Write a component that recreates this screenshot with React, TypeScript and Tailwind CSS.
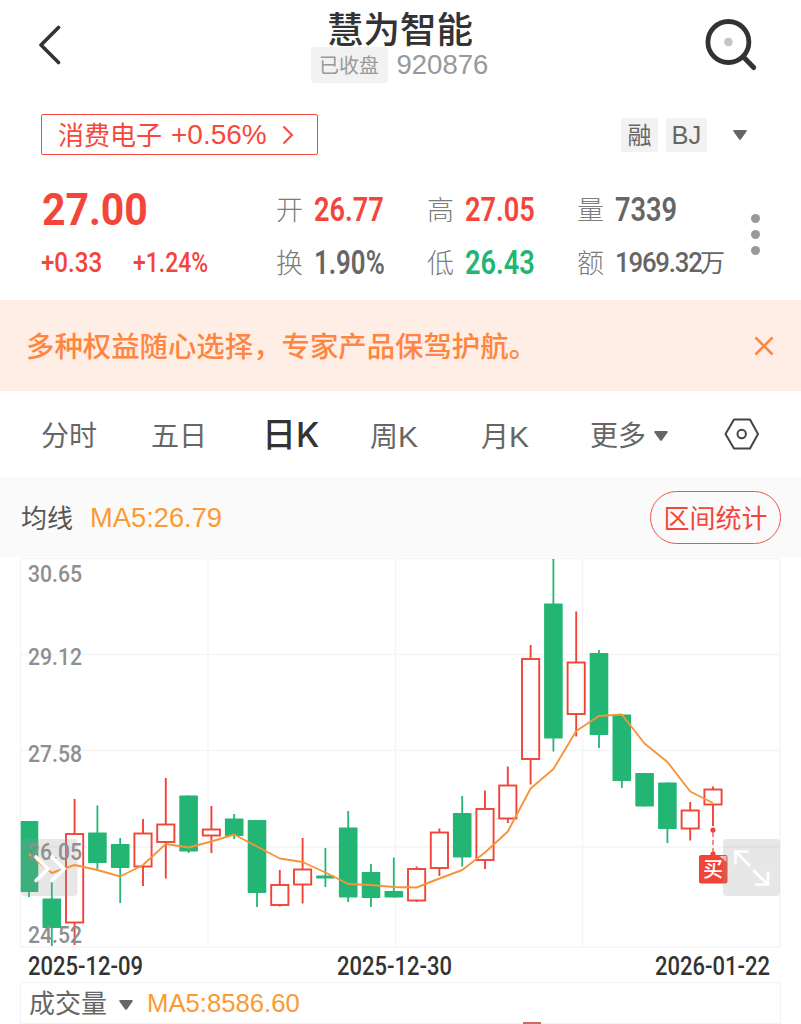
import type { ReactNode } from "react";

type Candle = { top: number; bottom: number; high: number; low: number; up?: boolean };

// Vertical positions are in chart units, one candle every STEP
const CANDLES: Candle[] = [
  { top: 821, bottom: 892, high: 821, low: 897 },
  { top: 898.5, bottom: 928, high: 882, low: 946 },
  { top: 834, bottom: 922.5, high: 799, low: 945, up: true },
  { top: 832.5, bottom: 863, high: 805.5, low: 869 },
  { top: 844, bottom: 868, high: 838, low: 903 },
  { top: 833.5, bottom: 866.5, high: 819, low: 886, up: true },
  { top: 824.5, bottom: 842, high: 778, low: 878.5, up: true },
  { top: 795.5, bottom: 851.5, high: 795.5, low: 853 },
  { top: 829.5, bottom: 835.5, high: 806, low: 853, up: true },
  { top: 818.5, bottom: 836, high: 814, low: 839 },
  { top: 820, bottom: 893, high: 820, low: 907 },
  { top: 885, bottom: 905, high: 870, low: 906.5, up: true },
  { top: 869.5, bottom: 884.5, high: 838, low: 903.5, up: true },
  { top: 875.5, bottom: 878.5, high: 848, low: 887 },
  { top: 827.5, bottom: 897.5, high: 811, low: 902 },
  { top: 872, bottom: 898, high: 864, low: 907 },
  { top: 891, bottom: 897.5, high: 857.5, low: 897.5 },
  { top: 869, bottom: 900.5, high: 866.5, low: 902, up: true },
  { top: 832.5, bottom: 868, high: 828.5, low: 876, up: true },
  { top: 813, bottom: 857.5, high: 796, low: 866.5 },
  { top: 809, bottom: 860, high: 790.5, low: 869, up: true },
  { top: 785.5, bottom: 818.5, high: 766.5, low: 823, up: true },
  { top: 659, bottom: 759, high: 645, low: 784.5, up: true },
  { top: 603.5, bottom: 738.5, high: 559, low: 751.5 },
  { top: 662.5, bottom: 714, high: 611.5, low: 736.5, up: true },
  { top: 653, bottom: 735, high: 650, low: 748 },
  { top: 714.5, bottom: 781, high: 714.5, low: 788 },
  { top: 773, bottom: 806.5, high: 773, low: 806.5 },
  { top: 782.5, bottom: 829, high: 782.5, low: 843 },
  { top: 810.5, bottom: 828.5, high: 802, low: 840.5, up: true },
  { top: 789.5, bottom: 804.5, high: 786.5, low: 826, up: true },
];

const MA5 = [
  854, 873, 865, 870, 876.5, 865, 844, 847.5, 841.5, 834.5, 846.5, 858.5, 862, 872.5, 884, 885,
  887, 887.5, 878.5, 870, 852.5, 831.5, 788.5, 769, 731, 716, 714.5, 743.5, 762, 791.5, 803,
];

const STEP = 22.8;
const FIRST_X = 29;
const RED = "#f04438";
const GREEN = "#22b573";

const PRICE_LABELS = [
  { y: 582, text: "30.65" },
  { y: 665, text: "29.12" },
  { y: 762, text: "27.58" },
  { y: 860, text: "26.05" },
  { y: 943, text: "24.52" },
];

const xAt = (i: number) => FIRST_X + i * STEP;

function Num({ className = "", children }: { className?: string; children: ReactNode }) {
  return (
    <span className={`inline-block origin-left whitespace-nowrap font-[Roboto,sans-serif] ${className}`}>
      {children}
    </span>
  );
}

function Caret({ className = "" }: { className?: string }) {
  return (
    <svg viewBox="0 0 14 10" className={`h-[10px] w-[14px] ${className}`} fill="#666">
      <path d="M1.5 0h11c1.1 0 1.6 1 .9 1.8L8 9.2c-.5.7-1.5.7-2 0L.6 1.8C-.1 1 .4 0 1.5 0z" />
    </svg>
  );
}

function Header() {
  return (
    <header className="flex h-[92px] items-start justify-between pl-[38px] pr-[43px]">
      <svg viewBox="0 0 24 40" className="mt-[25px] h-10 w-6" fill="none" stroke="#333" strokeWidth="3.6" strokeLinecap="round" strokeLinejoin="round">
        <path d="M20.5 2.5 3 20l17.5 17.5" />
      </svg>
      <div className="ml-[34px] flex flex-col items-center">
        <h1 className="mt-[11px] h-[36px] text-[36.5px] font-medium leading-[40px] text-[#333]">慧为智能</h1>
        <div className="flex h-9 items-center gap-[9px]">
          <span className="flex h-9 w-[77px] items-center justify-center rounded bg-[#f2f2f2] pt-[2px] text-[20px] text-[#999]">
            已收盘
          </span>
          <span className="w-[93px] whitespace-nowrap text-[27.5px] text-[#999]">920876</span>
        </div>
      </div>
      <svg viewBox="0 0 54 54" className="mt-[18px] h-[54px] w-[54px]" fill="none" stroke="#333" strokeLinecap="round">
        <circle cx="24.4" cy="24" r="20.5" strokeWidth="4.8" />
        <path d="m39.5 39 10.2 10.5" strokeWidth="5" />
        <circle cx="24.4" cy="24" r="4.3" fill="#c4c4c4" stroke="none" />
      </svg>
    </header>
  );
}

function SectorRow() {
  return (
    <div className="mt-[22px] flex h-[41px] items-center justify-between pl-[41px] pr-[54px]">
      <div className="flex h-[41px] w-[277px] items-center rounded-[2px] border-[1.5px] border-[#f7483b] pl-[16px] text-[#f7483b]">
        <span className="pt-[3px] text-[26px]">消费电子</span>
        <span className="ml-[9px] w-[98px] whitespace-nowrap pt-px text-[28px]">+0.56%</span>
        <svg viewBox="0 0 12 20" className="ml-[13px] h-5 w-3" fill="none" stroke="currentColor" strokeWidth="2">
          <path d="m1.5 1.5 8.5 8.5-8.5 8.5" />
        </svg>
      </div>
      <div className="flex items-center text-[#666]">
        <span className="flex h-[34px] w-[37px] items-center justify-center rounded-[2px] bg-[#f2f2f2] pt-[2px] text-[24px]">融</span>
        <span className="ml-2 flex h-[34px] w-[41px] items-center justify-center rounded-[2px] bg-[#f2f2f2] pt-px text-[25.5px]">BJ</span>
        <Caret className="ml-[26px]" />
      </div>
    </div>
  );
}

function Stat({ label, children }: { label: string; children: ReactNode }) {
  return (
    <div className="flex h-[53px] items-center">
      <span className="w-[38px] pt-[3px] text-[27px] font-light text-[#7c7c7c]">{label}</span>
      {children}
    </div>
  );
}

function Quote() {
  const value = "text-[34px] font-semibold";
  return (
    <section className="mt-[28px] flex h-[117px] pl-[41px] pr-[40px]">
      <div className="w-[235px] text-[#f4453a]">
        <div className="flex h-[53px] items-center pl-px">
          <Num className="scale-x-[0.91] text-[45px] font-bold">27.00</Num>
        </div>
        <div className="flex h-[53px] items-center">
          <div className="w-[92px]">
            <Num className="scale-x-[0.86] text-[28px] font-medium">+0.33</Num>
          </div>
          <Num className="scale-x-[0.82] text-[28px] font-medium">+1.24%</Num>
        </div>
      </div>
      <div className="w-[151px]">
        <Stat label="开"><Num className={`${value} scale-x-[0.8] text-[#f4453a]`}>26.77</Num></Stat>
        <Stat label="换"><Num className={`${value} scale-x-[0.76] text-[#666]`}>1.90%</Num></Stat>
      </div>
      <div className="w-[150px]">
        <Stat label="高"><Num className={`${value} scale-x-[0.8] text-[#f4453a]`}>27.05</Num></Stat>
        <Stat label="低"><Num className={`${value} scale-x-[0.8] text-[#22b573]`}>26.43</Num></Stat>
      </div>
      <div className="w-[174px]">
        <Stat label="量"><Num className={`${value} scale-x-[0.8] text-[#666]`}>7339</Num></Stat>
        <Stat label="额">
          <span className="flex items-center text-[#666]">
            {/* tighter tracking keeps the unit clear of the digits */}
            <span className="w-[85px]"><Num className="scale-x-[0.92] text-[28px] font-medium tracking-[-1.3px]">1969.32</Num></span>
            <span className="pt-[2px] text-[25px]">万</span>
          </span>
        </Stat>
      </div>
      <div className="mt-[31px] flex flex-col gap-[7px]">
        <i className="size-[9px] rounded-full bg-[#999]" />
        <i className="size-[9px] rounded-full bg-[#999]" />
        <i className="size-[9px] rounded-full bg-[#999]" />
      </div>
    </section>
  );
}

function Banner() {
  return (
    <div className="flex h-[91px] items-center justify-between bg-[#ffeee6] pl-[26px] pr-[27px] text-[#ff8540]">
      <p className="pt-[4px] text-[28.4px] font-medium">多种权益随心选择，专家产品保驾护航。</p>
      <svg viewBox="0 0 20 20" className="size-5" fill="none" stroke="currentColor" strokeWidth="2.6">
        <path d="m1.5 1.5 17 17M18.5 1.5l-17 17" />
      </svg>
    </div>
  );
}

function Tabs() {
  return (
    <nav className="flex h-[86px] items-center pl-[41px] text-[28px] text-[#666]">
      <span className="w-[110px] pt-[5px]">分时</span>
      <span className="w-[111px] pt-[5px]">五日</span>
      <span className="w-[108px] pt-px text-[34px] font-medium text-[#333]">
        日<span className="font-[Inter] text-[34px]">K</span>
      </span>
      <span className="w-[111px] pt-[4px]">周<span className="text-[30px]">K</span></span>
      <span className="w-[109px] pt-[4px]">月<span className="text-[30px]">K</span></span>
      <span className="flex w-[134px] items-center gap-2">
        <span className="pt-[5px]">更多</span>
        <Caret className="mt-[3px]" />
      </span>
      <svg viewBox="0 0 36 32" className="h-8 w-9" fill="none" stroke="#444" strokeWidth="2" strokeLinejoin="round">
        <path d="M10 1.5h16L34 16l-8 14.5H10L1.5 16z" />
        <circle cx="17.7" cy="16" r="4.2" />
      </svg>
    </nav>
  );
}

function AverageBar() {
  return (
    <div className="flex h-[80px] items-center bg-[#fafafa] pl-[21px] pr-[20px]">
      <span className="pt-[4px] text-[26px] text-[#555]">均线</span>
      <span className="ml-[17px] pt-[3px] text-[27.3px] text-[#fb9a35]">MA5:26.79</span>
      <button className="ml-auto flex h-[53px] w-[131px] items-center justify-center rounded-full border-[1.5px] border-[#f0564a] pt-[5px] text-[26px] text-[#f4453a]">
        区间统计
      </button>
    </div>
  );
}

function CandleChart() {
  return (
    <svg viewBox="0 557 801 425" className="block h-[425px] w-[801px]">
      <g stroke="#f5f5f6" strokeWidth="1.5">
        {[558.5, 654.5, 750.5, 847, 947].map((y) => (
          <line key={y} x1="20.5" x2="780" y1={y} y2={y} />
        ))}
        {[20.5, 208, 395.5, 582.5, 780].map((x) => (
          <line key={x} x1={x} x2={x} y1="558" y2="947" />
        ))}
      </g>

      {CANDLES.map((c, i) => {
        const x = xAt(i);
        if (c.up) {
          return (
            <g key={i} fill="none" stroke={RED} strokeWidth="1.9">
              <path d={`M${x} ${c.high}V${c.top}M${x} ${c.bottom}V${c.low}`} />
              <rect x={x - 8.6} y={c.top} width="17.2" height={c.bottom - c.top} />
            </g>
          );
        }
        const left = Math.max(x - 9.3, 20.7);
        return (
          <g key={i} fill={GREEN}>
            <rect x={x - 0.9} y={c.high} width="1.8" height={c.low - c.high} />
            <rect x={left} y={c.top} width={x + 9.3 - left} height={c.bottom - c.top} rx="0.8" />
          </g>
        );
      })}

      <rect x="21" y="839" width="56.5" height="57" rx="4" fill="#999" fillOpacity="0.24" />
      <polyline points={MA5.map((y, i) => `${xAt(i)},${y}`).join(" ")} fill="none" stroke="#f7943a" strokeWidth="1.9" strokeLinejoin="round" />

      <g fontFamily="Roboto, sans-serif" fontSize="24" fontWeight="500" fill="#8f8f8f">
        {PRICE_LABELS.map((l) => (
          <text key={l.text} x="28" y={l.y} textLength="54" lengthAdjust="spacingAndGlyphs">{l.text}</text>
        ))}
      </g>
      <path d="m36 857 12 12-12 11.5M52 857l12 12-12 11.5" fill="none" stroke="#fff" strokeWidth="3.6" strokeLinecap="round" />

      {/* buy marker */}
      <g fill={RED}>
        <circle cx="713" cy="830" r="2.6" />
        <circle cx="713" cy="854" r="2.6" />
        <path d="M713 832v22" stroke={RED} strokeWidth="1.2" strokeDasharray="5 3" />
        <rect x="699" y="855" width="28.5" height="28.5" rx="2" />
        <path d="M719.5 856h7v6z" fill="#f9c6c2" />
      </g>
      <text x="713" y="876.5" textAnchor="middle" fontSize="20" fontWeight="500" fill="#fff" fontFamily="Noto Sans CJK SC, sans-serif">买</text>

      <rect x="723" y="839" width="57" height="57" rx="4" fill="#999" fillOpacity="0.24" />
      <g fill="none" stroke="#fff" strokeWidth="2.6" strokeLinecap="round">
        <path d="M749 865 735.5 851.5M735.5 863.5v-12h12M754 871l14 13.5M768 872.5v12h-12" />
      </g>

      <g fontFamily="Roboto, sans-serif" fontSize="25" fontWeight="500" fill="#333">
        <text x="28" y="975" textLength="115" lengthAdjust="spacingAndGlyphs">2025-12-09</text>
        <text x="337" y="975" textLength="115" lengthAdjust="spacingAndGlyphs">2025-12-30</text>
        <text x="655" y="975" textLength="115" lengthAdjust="spacingAndGlyphs">2026-01-22</text>
      </g>
    </svg>
  );
}

function VolumeBar() {
  return (
    <div className="mx-5 flex h-[42px] items-center border border-[#f3f3f4] pl-[8px]">
      <span className="pt-[3px] text-[26px] text-[#666]">成交量</span>
      <Caret className="ml-[12px] mt-[3px]" />
      <span className="ml-[14px] pt-px text-[25.7px] text-[#fb9a35]">MA5:8586.60</span>
      <i className="mb-[-39px] ml-auto mr-[239px] h-[2px] w-[18px] bg-[#cf6a61]" />
    </div>
  );
}

export default function App() {
  return (
    <main className="h-[1024px] w-[801px] overflow-hidden bg-white font-['Liberation_Sans','Noto_Sans_CJK_SC',sans-serif]">
      <Header />
      <SectorRow />
      <Quote />
      <Banner />
      <Tabs />
      <AverageBar />
      <CandleChart />
      <VolumeBar />
    </main>
  );
}
